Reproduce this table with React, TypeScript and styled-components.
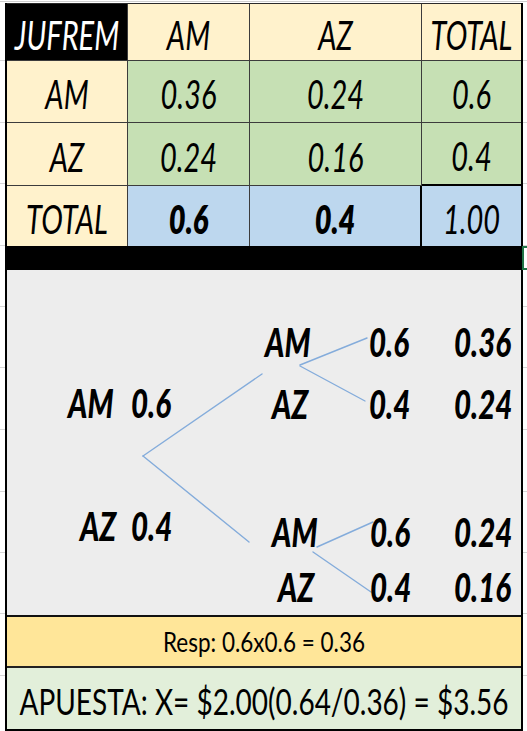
import React from 'react';
import styled, { createGlobalStyle } from 'styled-components';

const GlobalStyle = createGlobalStyle`
  html, body {
    margin: 0;
    padding: 0;
  }
  body {
    width: 527px;
    height: 731px;
    overflow: hidden;
    background-color: #ffffff;
    background-image:
      linear-gradient(#cfcfcf, #cfcfcf),
      repeating-linear-gradient(to bottom, transparent 0px, transparent 60px, #d6d6d6 60px, #d6d6d6 61px, transparent 61px, transparent 61.5px);
    background-size: 100% 1px, 100% 100%;
    background-position: 0 1px, 0 0;
    background-repeat: no-repeat, no-repeat;
    font-family: Lato, "Open Sans", "DejaVu Sans", sans-serif;
  }
`;

const Page = styled.div`
  position: relative;
  width: 527px;
  height: 731px;
  box-sizing: border-box;
  padding: 3px 4px 0 5px;
`;

const Sheet = styled.div`
  display: flex;
  flex-direction: column;
  height: 728px;
  box-sizing: border-box;
  border-left: 2px solid #000;
  border-right: 2px solid #000;
  border-bottom: 2px solid #000;
`;

const Table = styled.div`
  display: grid;
  grid-template-columns: 121px 122px 172px 99px;
  grid-template-rows: 57px 62px 63px 60px;
  border-top: 1px solid #2a2a2a;
`;

type CellProps = {
  $bg: string;
  $last?: boolean;
  $noBottom?: boolean;
  $strongRight?: boolean;
  $strongBottom?: boolean;
};

const Cell = styled.div<CellProps>`
  display: flex;
  align-items: center;
  justify-content: center;
  box-sizing: border-box;
  overflow: hidden;
  background: ${(p) => p.$bg};
  border-right: ${(p) => (p.$last ? 'none' : p.$strongRight ? '2px solid #000' : '1px solid #3c3c3c')};
  border-bottom: ${(p) => (p.$noBottom ? 'none' : p.$strongBottom ? '2px solid #000' : '1px solid #3c3c3c')};
`;

const CellText = styled.span<{ $bold?: boolean; $light?: boolean }>`
  display: inline-block;
  font-family: Lato, "Open Sans", sans-serif;
  font-style: italic;
  font-size: 29px;
  font-weight: ${(p) => (p.$bold ? 800 : 400)};
  color: ${(p) => (p.$light ? '#ffffff' : '#000000')};
  line-height: 1;
  transform: translateY(2px) scaleY(1.38);
`;

const BlackBar = styled.div`
  height: 24px;
  background: #000;
`;

const TreePanel = styled.div`
  position: relative;
  height: 345px;
  background: #ededed;
`;

const TreeLines = styled.svg`
  position: absolute;
  left: 0;
  top: 0;
  width: 514px;
  height: 345px;
`;

const Node = styled.span<{ $x: number; $y: number }>`
  position: absolute;
  left: ${(p) => p.$x}px;
  top: ${(p) => p.$y}px;
  font-family: Lato, "Open Sans", sans-serif;
  font-style: italic;
  font-weight: 900;
  font-size: 29.5px;
  line-height: 1;
  white-space: pre;
  color: #000;
  transform: translateY(-50%) scaleY(1.33);
`;

const RespBar = styled.div`
  height: 49px;
  display: flex;
  align-items: center;
  justify-content: center;
  background: #ffe699;
  border-top: 2px solid #111;
  border-bottom: 2px solid #222;
`;

const RespText = styled.span`
  display: inline-block;
  font-family: Lato, "Open Sans", sans-serif;
  font-size: 22.5px;
  color: #000;
  line-height: 1;
  transform: translateY(1px) scaleY(1.22);
`;

const BetBar = styled.div`
  flex: 1;
  display: flex;
  align-items: center;
  justify-content: center;
  background: #e2efda;
`;

const BetText = styled.span`
  display: inline-block;
  font-family: Lato, "Open Sans", sans-serif;
  font-size: 28px;
  color: #000;
  line-height: 1;
  white-space: pre;
  transform: translateY(1px) scaleY(1.34);
`;

const SelectionMark = styled.div`
  position: absolute;
  left: 522px;
  top: 246px;
  width: 10px;
  height: 24px;
  box-sizing: border-box;
  border: 2px solid #217346;
  background: #fff;
`;

const CREAM = '#fff2cc';
const GREEN = '#c6e0b4';
const BLUE = '#bdd7ee';

const LINE = '#84acdb';

export default function App() {
  return (
    <>
      <GlobalStyle />
      <Page>
        <SelectionMark />
        <Sheet>
          <Table>
            <Cell $bg="#000">
              <CellText $light>JUFREM</CellText>
            </Cell>
            <Cell $bg={CREAM}>
              <CellText>AM</CellText>
            </Cell>
            <Cell $bg={CREAM}>
              <CellText>AZ</CellText>
            </Cell>
            <Cell $bg={CREAM} $last>
              <CellText>TOTAL</CellText>
            </Cell>

            <Cell $bg={CREAM}>
              <CellText>AM</CellText>
            </Cell>
            <Cell $bg={GREEN}>
              <CellText>0.36</CellText>
            </Cell>
            <Cell $bg={GREEN}>
              <CellText>0.24</CellText>
            </Cell>
            <Cell $bg={GREEN} $last>
              <CellText>0.6</CellText>
            </Cell>

            <Cell $bg={CREAM}>
              <CellText>AZ</CellText>
            </Cell>
            <Cell $bg={GREEN}>
              <CellText>0.24</CellText>
            </Cell>
            <Cell $bg={GREEN}>
              <CellText>0.16</CellText>
            </Cell>
            <Cell $bg={GREEN} $last $strongBottom>
              <CellText>0.4</CellText>
            </Cell>

            <Cell $bg={CREAM} $noBottom>
              <CellText>TOTAL</CellText>
            </Cell>
            <Cell $bg={BLUE} $noBottom>
              <CellText $bold>0.6</CellText>
            </Cell>
            <Cell $bg={BLUE} $noBottom $strongRight>
              <CellText $bold>0.4</CellText>
            </Cell>
            <Cell $bg={BLUE} $noBottom $last>
              <CellText>1.00</CellText>
            </Cell>
          </Table>

          <BlackBar />

          <TreePanel>
            <TreeLines viewBox="0 0 514 345">
              <g stroke={LINE} strokeWidth="1.4" fill="none" strokeLinecap="round">
                <line x1="136" y1="186" x2="255" y2="104" />
                <line x1="136" y1="186" x2="242" y2="272" />
                <line x1="293" y1="95" x2="360" y2="68" />
                <line x1="293" y1="96" x2="358" y2="131" />
                <line x1="310" y1="277" x2="366" y2="252" />
                <line x1="306" y1="282" x2="364" y2="322" />
              </g>
            </TreeLines>

            <Node $x={61} $y={133}>AM</Node>
            <Node $x={124} $y={133}>0.6</Node>
            <Node $x={73} $y={256}>AZ</Node>
            <Node $x={124} $y={256}>0.4</Node>

            <Node $x={258} $y={72}>AM</Node>
            <Node $x={362} $y={72}>0.6</Node>
            <Node $x={447} $y={72}>0.36</Node>

            <Node $x={265} $y={134}>AZ</Node>
            <Node $x={362} $y={134}>0.4</Node>
            <Node $x={447} $y={134}>0.24</Node>

            <Node $x={265} $y={262}>AM</Node>
            <Node $x={363} $y={262}>0.6</Node>
            <Node $x={447} $y={262}>0.24</Node>

            <Node $x={271} $y={317}>AZ</Node>
            <Node $x={363} $y={317}>0.4</Node>
            <Node $x={447} $y={317}>0.16</Node>
          </TreePanel>

          <RespBar>
            <RespText>Resp: 0.6x0.6 = 0.36</RespText>
          </RespBar>

          <BetBar>
            <BetText>APUESTA: X= $2.00(0.64/0.36) = $3.56</BetText>
          </BetBar>
        </Sheet>
      </Page>
    </>
  );
}
